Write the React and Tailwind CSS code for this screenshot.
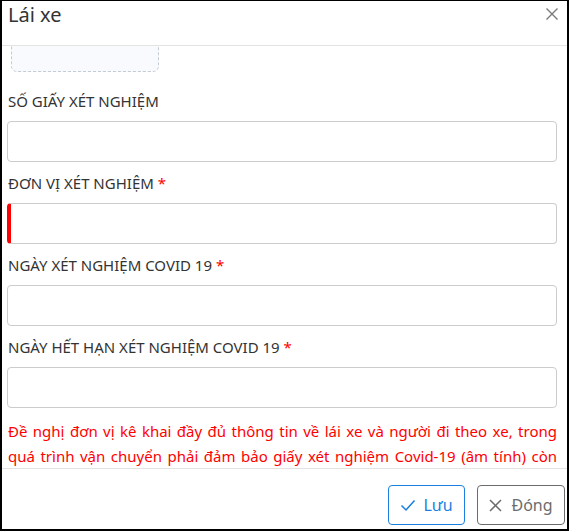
import React from "react";

function Field({ label, required, error }) {
  return (
    <div className="flex flex-col">
      <div className="h-[20px] pl-[1px] text-[15px] leading-[20px] text-[#333]">
        {label}
        {required && <span className="text-[#f00]"> *</span>}
      </div>
      <div
        className={
          "mt-[10px] mb-[11px] h-[41px] w-[550px] rounded-[4px] border border-[#ccc] bg-white " +
          (error ? "border-l-4 border-l-[#f00]" : "")
        }
      />
    </div>
  );
}

export default function App() {
  return (
    <div
      className="flex h-[531px] w-[569px] flex-col overflow-hidden border-t border-r-2 border-b-2 border-l-2 border-black bg-white"
      style={{ fontFamily: '"Noto Sans", "Open Sans", sans-serif' }}
    >
      <div className="flex h-[45px] shrink-0 items-start justify-between border-b border-[#e3e3e3] pl-[6px] pr-[9px]">
        <div className="text-[20px] leading-[28px] text-[#333]">Lái xe</div>
        <svg
          className="mt-[7px]"
          width="12"
          height="12"
          viewBox="0 0 12 12"
          fill="none"
          stroke="#7a7a7a"
          strokeWidth="1.4"
        >
          <path d="M0.5 0.5 11.5 11.5M11.5 0.5 0.5 11.5" />
        </svg>
      </div>

      <div className="flex-1 overflow-hidden pl-[5px] pr-[10px]">
        <div className="-mt-[74px] ml-[4px] h-[100px] w-[148px] rounded-[6px] border border-dashed border-[#c5cbd3] bg-[#f8fafd]" />
        <div className="mt-[19px] flex flex-col">
          <Field label="SỐ GIẤY XÉT NGHIỆM" />
          <Field label="ĐƠN VỊ XÉT NGHIỆM" required error />
          <Field label="NGÀY XÉT NGHIỆM COVID 19" required />
          <Field label="NGÀY HẾT HẠN XÉT NGHIỆM COVID 19" required />
        </div>
        <p className="pl-[1px] text-justify text-[15px] leading-[25px] text-[#f00] [text-align-last:justify]">
          Đề nghị đơn vị kê khai đầy đủ thông tin về lái xe và người đi theo xe, trong quá trình vận chuyển phải đảm bảo giấy xét nghiệm Covid-19 (âm tính) còn
        </p>
      </div>

      <div className="flex h-[61px] shrink-0 items-start justify-end gap-[12px] border-t border-[#e3e3e3] pt-[16px] pr-[2px]">
        <button className="flex h-[40px] w-[77px] items-center justify-center gap-[7px] rounded-[4px] border border-[#1a7fe0] bg-white text-[16px] text-[#1a7fe0]">
          <svg width="16" height="16" viewBox="0 0 16 16" fill="none" stroke="#1a7fe0" strokeWidth="1.5">
            <path d="M1.5 8.5 6 13 14.5 3.5" />
          </svg>
          <span>Lưu</span>
        </button>
        <button className="flex h-[40px] w-[88px] items-center justify-center gap-[9px] rounded-[4px] border border-[#6c6c6c] bg-white text-[16px] text-[#6c6c6c]">
          <svg width="13" height="13" viewBox="0 0 13 13" fill="none" stroke="#6c6c6c" strokeWidth="1.5">
            <path d="M1 1 12 12M12 1 1 12" />
          </svg>
          <span>Đóng</span>
        </button>
      </div>
    </div>
  );
}
